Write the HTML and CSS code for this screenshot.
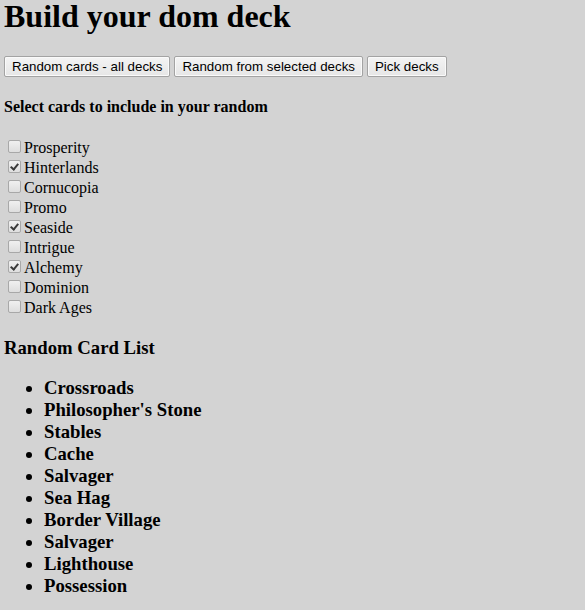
FILE: index.html
```html
<!DOCTYPE html>
<html>
<head>
<meta charset="utf-8">
<title>Build your dom deck</title>
<link rel="stylesheet" href="styles.css">
</head>
<body>
<h1 class="title">Build your dom deck</h1>
<div class="actions">
  <button class="btn">Random cards - all decks</button>
  <button class="btn">Random from selected decks</button>
  <button class="btn">Pick decks</button>
</div>
<h4 class="subtitle">Select cards to include in your random</h4>
<div class="decks">
  <label class="deck"><span class="box"></span>Prosperity</label>
  <label class="deck"><span class="box checked"></span>Hinterlands</label>
  <label class="deck"><span class="box"></span>Cornucopia</label>
  <label class="deck"><span class="box"></span>Promo</label>
  <label class="deck"><span class="box checked"></span>Seaside</label>
  <label class="deck"><span class="box"></span>Intrigue</label>
  <label class="deck"><span class="box checked"></span>Alchemy</label>
  <label class="deck"><span class="box"></span>Dominion</label>
  <label class="deck"><span class="box"></span>Dark Ages</label>
</div>
<h3 class="list-title">Random Card List</h3>
<ul class="cards">
  <li>Crossroads</li>
  <li>Philosopher's Stone</li>
  <li>Stables</li>
  <li>Cache</li>
  <li>Salvager</li>
  <li>Sea Hag</li>
  <li>Border Village</li>
  <li>Salvager</li>
  <li>Lighthouse</li>
  <li>Possession</li>
</ul>
</body>
</html>
```
FILE: styles.css
```css
html, body {
  background: #d3d3d3;
}
body {
  margin: 0;
  padding: 0 4px;
  font-family: "Liberation Serif", "Times New Roman", serif;
  font-size: 16px;
  color: #000;
}
.title {
  margin: 0;
  font-size: 32px;
  line-height: 33px;
  font-weight: bold;
}
.actions {
  margin-top: 23px;
  height: 21px;
  display: flex;
  gap: 4px;
}
.btn {
  font-family: "Liberation Sans", Arial, sans-serif;
  font-size: 13.33px;
  color: #000;
  height: 21px;
  padding: 0 7px;
  margin: 0;
  border: 1px solid #a3a3a3;
  border-radius: 2px;
  background: linear-gradient(#f4f4f4, #e6e6e6);
  box-shadow: inset 0 0 0 1px #fafafa;
}
.subtitle {
  margin: 21px 0 0;
  font-size: 16px;
  line-height: 18px;
  font-weight: bold;
}
.decks {
  margin-top: 22px;
  display: flex;
  flex-direction: column;
}
.deck {
  display: flex;
  align-items: flex-start;
  height: 20px;
  line-height: 20px;
}
.box {
  width: 13px;
  height: 13px;
  box-sizing: border-box;
  margin: 2px 3px 0 4px;
  border: 1px solid #a8a8a8;
  border-radius: 2px;
  background: linear-gradient(#f0f0f0, #dedede);
  position: relative;
  flex: none;
}
.box.checked::after {
  content: "";
  position: absolute;
  left: 3px;
  top: 1px;
  width: 3px;
  height: 6px;
  border: solid #3a3a3a;
  border-width: 0 2px 2px 0;
  transform: rotate(40deg);
}
.list-title {
  margin: 19px 0 0;
  font-size: 18.72px;
  line-height: 21px;
  font-weight: bold;
}
.cards {
  margin: 19px 0 0;
  padding-left: 40px;
  font-size: 18.72px;
  line-height: 22px;
  font-weight: bold;
}
```
